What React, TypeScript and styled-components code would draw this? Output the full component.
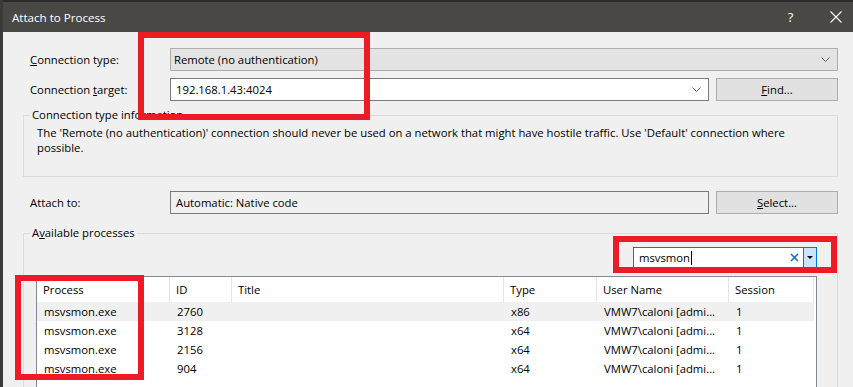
import React from "react";
import styled, { createGlobalStyle } from "styled-components";

const GlobalStyle = createGlobalStyle`
  html, body {
    margin: 0;
    padding: 0;
    background: #f0f0f0;
  }
  body {
    font-family: "Open Sans", "Noto Sans", sans-serif;
    font-size: 11.3px;
    color: #000;
  }
`;

const Window = styled.div`
  position: relative;
  width: 853px;
  height: 387px;
  overflow: hidden;
  box-sizing: border-box;
  background: #f0f0f0;
  border-left: 3px solid #3a3a3a;
  display: flex;
  flex-direction: column;
`;

const TitleBar = styled.div`
  flex: none;
  height: 32px;
  box-sizing: border-box;
  border-top: 2px solid #2b2b2b;
  background: #4a4845;
  color: #fff;
  display: flex;
  align-items: center;
  padding-left: 9px;
`;

const TitleText = styled.span`
  flex: 1;
  font-size: 11.6px;
`;

const CaptionButtons = styled.div`
  display: flex;
  margin-right: -5px;
`;

const CaptionButton = styled.div`
  width: 45px;
  height: 30px;
  display: flex;
  align-items: center;
  justify-content: center;
  font-size: 13px;
`;

const Body = styled.div`
  flex: 1;
  padding: 16px 15px 0 20px;
  display: flex;
  flex-direction: column;
`;

const FieldRow = styled.div<{ $top?: number }>`
  display: flex;
  align-items: center;
  margin-top: ${(p) => p.$top ?? 0}px;
`;

const Label = styled.div`
  width: 147px;
  flex: none;
  box-sizing: border-box;
  padding-left: 7px;
`;

const Field = styled.div<{ $variant: "combo" | "edit" | "readonly" }>`
  flex: 1;
  height: 23px;
  box-sizing: border-box;
  display: flex;
  align-items: center;
  padding: 0 7px 0 ${(p) => (p.$variant === "combo" ? 3 : 5)}px;
  background: ${(p) =>
    p.$variant === "combo" ? "#e3e3e3" : p.$variant === "edit" ? "#fff" : "#f0f0f0"};
  border: 1px solid ${(p) => (p.$variant === "combo" ? "#adadad" : "#7a7a7a")};
`;

const FieldText = styled.span`
  flex: 1;
`;

const Button = styled.div`
  width: 122px;
  height: 23px;
  margin-left: 7px;
  flex: none;
  box-sizing: border-box;
  display: flex;
  align-items: center;
  justify-content: center;
  background: #e1e1e1;
  border: 1px solid #adadad;
`;

const Key = styled.u`
  text-underline-offset: 1px;
`;

const Group = styled.fieldset<{ $top: number }>`
  margin: ${(p) => p.$top}px 0 0;
  min-width: 0;
  box-sizing: border-box;
  border: 1px solid #dcdcdc;
`;

const InfoGroup = styled(Group)`
  padding: 4px 13px 21px;
`;

const ProcGroup = styled(Group)`
  padding: 7px 20px 0 12px;
  flex: 1;
  border-bottom: none;
  display: flex;
  flex-direction: column;
`;

const Legend = styled.legend`
  padding: 0 2px;
  margin-left: -7px;
  line-height: 12px;
`;

const ProcLegend = styled(Legend)`
  margin-left: -6px;
`;

const InfoText = styled.div`
  line-height: 15px;
`;

const SearchBox = styled.div`
  align-self: flex-end;
  width: 184px;
  height: 21px;
  margin-top: 1px;
  box-sizing: border-box;
  border: 1px solid #0078d7;
  display: flex;
  align-items: center;
  background: #fff;
`;

const SearchText = styled.div`
  flex: 1;
  display: flex;
  align-items: center;
  padding-left: 5px;
`;

const Caret = styled.span`
  width: 1px;
  height: 14px;
  background: #000;
  margin-left: 1px;
`;

const ClearIcon = styled.svg`
  margin-right: 4px;
`;

const DropPart = styled.div`
  width: 12px;
  height: 100%;
  border-left: 1px solid #0078d7;
  background: #cce4f7;
  display: flex;
  align-items: center;
  justify-content: center;
`;

const Table = styled.div`
  margin-top: 8px;
  flex: 1;
  border: 1px solid #828790;
  border-bottom: none;
  background: #fff;
`;

const Columns = `133px 62px 272px 93px 132px 85px`;

const HeaderRow = styled.div`
  display: grid;
  grid-template-columns: ${Columns};
  height: 25px;
`;

const HeaderCell = styled.div`
  display: flex;
  align-items: center;
  padding-left: 6px;
  border-right: 1px solid #e5e5e5;
`;

const Row = styled.div<{ $selected?: boolean }>`
  display: grid;
  grid-template-columns: ${Columns};
  width: 777px;
  height: 19px;
  background: ${(p) => (p.$selected ? "#f0f0f0" : "#fff")};
`;

const Cell = styled.div`
  display: flex;
  align-items: center;
  padding-left: 7px;
  white-space: nowrap;
  overflow: hidden;
`;

const Mark = styled.div<{ $x: number; $y: number; $w: number; $h: number }>`
  position: absolute;
  left: ${(p) => p.$x - 3}px;
  top: ${(p) => p.$y}px;
  width: ${(p) => p.$w}px;
  height: ${(p) => p.$h}px;
  box-sizing: border-box;
  border: 6px solid #ed1c24;
  pointer-events: none;
`;

const Chevron = () => (
  <svg width="9" height="5" viewBox="0 0 9 5">
    <polyline points="0.5,0.5 4.5,4.5 8.5,0.5" fill="none" stroke="#606060" strokeWidth="1" />
  </svg>
);

const processes = [
  { name: "msvsmon.exe", id: "2760", type: "x86" },
  { name: "msvsmon.exe", id: "3128", type: "x64" },
  { name: "msvsmon.exe", id: "2156", type: "x64" },
  { name: "msvsmon.exe", id: "904", type: "x64" },
];

export default function App() {
  return (
    <Window>
      <GlobalStyle />
      <TitleBar>
        <TitleText>Attach to Process</TitleText>
        <CaptionButtons>
          <CaptionButton>?</CaptionButton>
          <CaptionButton>
            <svg width="12" height="12" viewBox="0 0 12 12">
              <path d="M0.5 0.5 L11.5 11.5 M11.5 0.5 L0.5 11.5" stroke="#fff" strokeWidth="1.1" />
            </svg>
          </CaptionButton>
        </CaptionButtons>
      </TitleBar>
      <Body>
        <FieldRow>
          <Label>
            <Key>C</Key>onnection type:
          </Label>
          <Field $variant="combo">
            <FieldText>Remote (no authentication)</FieldText>
            <Chevron />
          </Field>
        </FieldRow>
        <FieldRow $top={7}>
          <Label>
            Connection <Key>t</Key>arget:
          </Label>
          <Field $variant="edit">
            <FieldText>192.168.1.43:4024</FieldText>
            <Chevron />
          </Field>
          <Button>
            <span>
              <Key>F</Key>ind...
            </span>
          </Button>
        </FieldRow>
        <InfoGroup $top={8}>
          <Legend>Connection type information</Legend>
          <InfoText>
            The 'Remote (no authentication)' connection should never be used on a network that
            might have hostile traffic. Use 'Default' connection where
            <br />
            possible.
          </InfoText>
        </InfoGroup>
        <FieldRow $top={14}>
          <Label>Attach to:</Label>
          <Field $variant="readonly">
            <FieldText>Automatic: Native code</FieldText>
          </Field>
          <Button>
            <span>
              <Key>S</Key>elect...
            </span>
          </Button>
        </FieldRow>
        <ProcGroup $top={13}>
          <ProcLegend>
            A<Key>v</Key>ailable processes
          </ProcLegend>
          <SearchBox>
            <SearchText>
              msvsmon
              <Caret />
            </SearchText>
            <ClearIcon width="9" height="9" viewBox="0 0 9 9">
              <path d="M1 1 L8 8 M8 1 L1 8" stroke="#1f6fc5" strokeWidth="1.6" />
            </ClearIcon>
            <DropPart>
              <svg width="6" height="3" viewBox="0 0 6 3">
                <polygon points="0,0 6,0 3,3" fill="#000" />
              </svg>
            </DropPart>
          </SearchBox>
          <Table>
            <HeaderRow>
              <HeaderCell>Process</HeaderCell>
              <HeaderCell>ID</HeaderCell>
              <HeaderCell>Title</HeaderCell>
              <HeaderCell>Type</HeaderCell>
              <HeaderCell>User Name</HeaderCell>
              <HeaderCell>Session</HeaderCell>
            </HeaderRow>
            {processes.map((p, i) => (
              <Row key={p.id} $selected={i === 0}>
                <Cell>{p.name}</Cell>
                <Cell>{p.id}</Cell>
                <Cell />
                <Cell>{p.type}</Cell>
                <Cell>VMW7\caloni [admi...</Cell>
                <Cell>1</Cell>
              </Row>
            ))}
          </Table>
        </ProcGroup>
      </Body>
      <Mark $x={138} $y={32} $w={232} $h={88} />
      <Mark $x={613} $y={236} $w={224} $h={37} />
      <Mark $x={15} $y={275} $w={129} $h={105} />
    </Window>
  );
}
